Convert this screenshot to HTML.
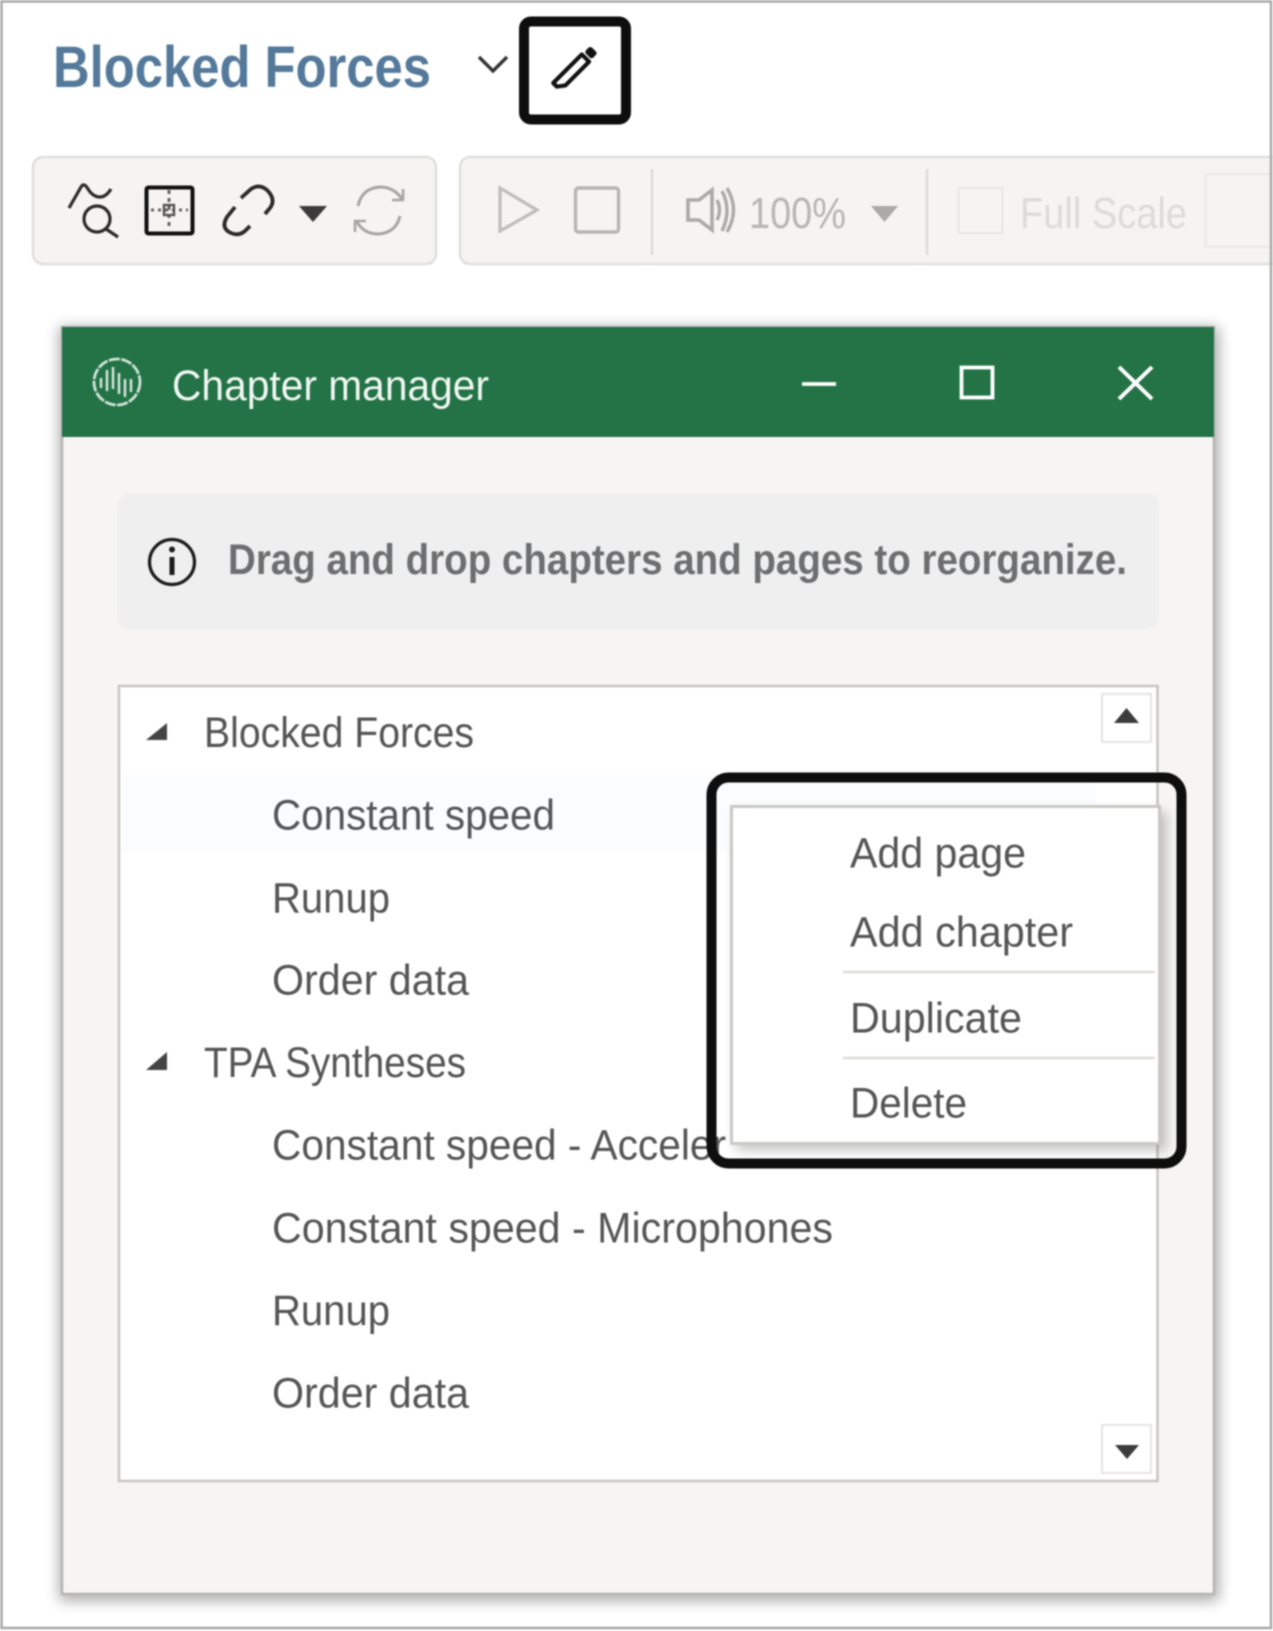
<!DOCTYPE html>
<html lang="en"><head><meta charset="utf-8"><title>Chapter manager</title>
<style>
html,body{margin:0;padding:0;background:#fff;width:1273px;height:1631px;overflow:hidden}
svg{display:block;filter:blur(.9px)}
text{font-family:"Liberation Sans",sans-serif}
.t{font-size:43px;fill:#555}
</style></head><body>
<svg width="1273" height="1631" viewBox="0 0 1273 1631" xmlns="http://www.w3.org/2000/svg">
<defs><filter id="s" x="-10%" y="-10%" width="120%" height="120%"><feGaussianBlur stdDeviation="7"/></filter>
<filter id="m" x="-10%" y="-10%" width="125%" height="125%"><feGaussianBlur stdDeviation="6"/></filter></defs>
<rect width="1273" height="1631" fill="#fff"/>

<!-- title -->
<text x="53" y="87" font-size="58" font-weight="700" fill="#54799a" textLength="378" lengthAdjust="spacingAndGlyphs">Blocked Forces</text>
<path d="M479 57L493 71L507 57" fill="none" stroke="#333" stroke-width="3.400"/>
<g transform="translate(574.500 69) rotate(45) scale(.86)">
<rect x="-6" y="-32" width="12" height="10" rx="3" fill="#111"/>
<path d="M-6 -18H6V21L0 29H-6Z" fill="none" stroke="#111" stroke-width="4.800" stroke-linejoin="round"/>
</g>
<rect x="524" y="21.500" width="102" height="98" rx="7" fill="none" stroke="#0e0e0e" stroke-width="10"/>

<!-- toolbars -->
<rect x="33" y="157" width="403" height="107" rx="10" fill="#f5f4f2" stroke="#e0dfdc" stroke-width="2.500"/>
<rect x="460" y="157" width="830" height="107" rx="10" fill="#f5f4f2" stroke="#e0dfdc" stroke-width="2.500"/>
<g fill="none" stroke="#2b2b2b" stroke-width="3.200">
<path d="M69 208L81 187Q84 182 88 189Q93 197 100 197Q106 197 111 189"/>
<circle cx="97" cy="219" r="13"/><path d="M106 229L118 237"/>
<rect x="146.500" y="187.500" width="46" height="46" rx="2" stroke-width="4" stroke="#111"/>
<path d="M169 190V230" stroke-dasharray="4 4" stroke="#666" stroke-width="3"/>
<path d="M151 210H188" stroke-dasharray="3 4" stroke="#666" stroke-width="3"/>
<rect x="164" y="205" width="10" height="10" stroke="#555" stroke-width="2.400"/>
<path d="M241 198L251 189Q260 183 268 191Q276 200 270 208L265 214" stroke-width="3.800"/>
<path d="M235 207L227 217Q221 227 229 232Q238 237 245 231L250 226" stroke-width="3.800"/>
</g>
<path d="M299 206H327L313 222Z" fill="#3a3a3a"/>
<g fill="none" stroke="#a6a6a6" stroke-width="3">
<path d="M358 206Q362 188 380 187Q394 187 402 199"/><path d="M400 216Q396 233 378 234Q364 234 357 222"/>
<path d="M403 189V200H392" stroke-width="2.600"/><path d="M355 232V221H366" stroke-width="2.600"/>
<path d="M500 188L537 210L500 231Z" stroke="#bdbdbb" stroke-width="3.200"/>
<rect x="575.500" y="188" width="43" height="44" rx="3" stroke="#b5b5b3" stroke-width="3.400"/>
<path d="M688 200H699L712 190V230L699 220H688Z" stroke="#aaa" stroke-width="3.600"/>
<path d="M717 200Q722 210 717 220M722 191Q732 210 722 231M727 188Q740 210 727 232" stroke="#aaa" stroke-width="3.400"/>
</g>
<path d="M652 169V255M927 169V255" stroke="#dcdbd8" stroke-width="2.400"/>
<text x="749" y="228" font-size="44" fill="#b6b6b6" textLength="97" lengthAdjust="spacingAndGlyphs">100%</text>
<path d="M871 206H898L884.500 222Z" fill="#aaa"/>
<rect x="958.500" y="188" width="44" height="45" fill="none" stroke="#e8e7e5" stroke-width="2"/>
<text x="1020" y="228" font-size="44" fill="#dcdbd9" textLength="167" lengthAdjust="spacingAndGlyphs">Full Scale</text>
<rect x="1205.500" y="174" width="80" height="73" fill="none" stroke="#eae9e7" stroke-width="2"/>

<!-- modal -->
<rect x="59" y="327" width="1160" height="1274" fill="#000" opacity=".32" filter="url(#s)"/>
<rect x="62" y="327" width="1152" height="1267" fill="#f6f5f3" stroke="#b5b5b3" stroke-width="2.500"/>
<rect x="62" y="327" width="1152" height="110" fill="#237347"/>
<circle cx="117" cy="382" r="23" fill="none" stroke="#cfe3d7" stroke-width="2.800" stroke-dasharray="11 1.500"/>
<path d="M101 378V388M107 370V391M113 367V389M119 373V394M125 379V397M131 379V392" stroke="#d8e8de" stroke-width="2.400" fill="none"/>
<text x="172" y="400" font-size="43" fill="#f1f7f3" textLength="317" lengthAdjust="spacingAndGlyphs">Chapter manager</text>
<path d="M802 384H836" stroke="#fff" stroke-width="3.800"/>
<rect x="961.500" y="367.500" width="31" height="30" fill="none" stroke="#fff" stroke-width="3.800"/>
<path d="M1119 367L1152 399M1152 367L1119 399" stroke="#fff" stroke-width="4"/>

<!-- info -->
<rect x="117" y="493" width="1042" height="136" rx="13" fill="#efefef"/>
<circle cx="172" cy="562" r="22.500" fill="none" stroke="#1c1c1c" stroke-width="3.200"/>
<rect x="169.500" y="557" width="5" height="18" fill="#1c1c1c"/><circle cx="172" cy="549.500" r="3" fill="#1c1c1c"/>
<text x="228" y="574" font-size="43" font-weight="700" fill="#6d6e70" textLength="899" lengthAdjust="spacingAndGlyphs">Drag and drop chapters and pages to reorganize.</text>

<!-- list -->
<rect x="119" y="686" width="1038.500" height="795" fill="#fff" stroke="#c6c5c1" stroke-width="2.500"/>
<rect x="122" y="775" width="974" height="77" fill="#fbfcfe"/>
<path d="M167 723V740H146Z" fill="#444"/>
<path d="M167 1052V1070H146Z" fill="#444"/>
<text class="t" x="204" y="747" textLength="270" lengthAdjust="spacingAndGlyphs">Blocked Forces</text>
<text class="t" x="272" y="829.500" textLength="283" lengthAdjust="spacingAndGlyphs">Constant speed</text>
<text class="t" x="272" y="912.500" textLength="118" lengthAdjust="spacingAndGlyphs">Runup</text>
<text class="t" x="272" y="994.500" textLength="197" lengthAdjust="spacingAndGlyphs">Order data</text>
<text class="t" x="204" y="1077" textLength="262" lengthAdjust="spacingAndGlyphs">TPA Syntheses</text>
<text class="t" x="272" y="1159.500" textLength="454" lengthAdjust="spacingAndGlyphs">Constant speed - Acceler</text>
<text class="t" x="272" y="1242.500" textLength="561" lengthAdjust="spacingAndGlyphs">Constant speed - Microphones</text>
<text class="t" x="272" y="1325" textLength="118" lengthAdjust="spacingAndGlyphs">Runup</text>
<text class="t" x="272" y="1407.500" textLength="197" lengthAdjust="spacingAndGlyphs">Order data</text>

<rect x="1102" y="694" width="49" height="48" fill="#fff" stroke="#e6e5e3" stroke-width="2"/>
<path d="M1114 723H1139L1126.500 708Z" fill="#3c3c3c"/>
<rect x="1102" y="1425" width="49" height="48" fill="#fff" stroke="#e6e5e3" stroke-width="2"/>
<path d="M1115 1445H1139L1127 1459Z" fill="#3c3c3c"/>

<!-- context menu -->
<rect x="736" y="812" width="430" height="338" fill="#000" opacity=".24" filter="url(#m)"/>
<rect x="731.500" y="806.500" width="428" height="337" fill="#fff" stroke="#c9c8c4" stroke-width="3"/>
<text class="t" x="850" y="867.500" textLength="176" lengthAdjust="spacingAndGlyphs">Add page</text>
<text class="t" x="850" y="946.500" textLength="223" lengthAdjust="spacingAndGlyphs">Add chapter</text>
<path d="M843 972H1155M843 1058H1155" stroke="#dcdbd7" stroke-width="2.500"/>
<text class="t" x="850" y="1032.500" textLength="172" lengthAdjust="spacingAndGlyphs">Duplicate</text>
<text class="t" x="850" y="1117.500" textLength="117" lengthAdjust="spacingAndGlyphs">Delete</text>
<rect x="711.500" y="777.500" width="470" height="386" rx="17" fill="none" stroke="#0e0e0e" stroke-width="10"/>

<!-- outer frame -->
<rect x="1.500" y="1.500" width="1269.500" height="1626.500" fill="none" stroke="#a9a9a9" stroke-width="2.500"/>
</svg>
</body></html>
